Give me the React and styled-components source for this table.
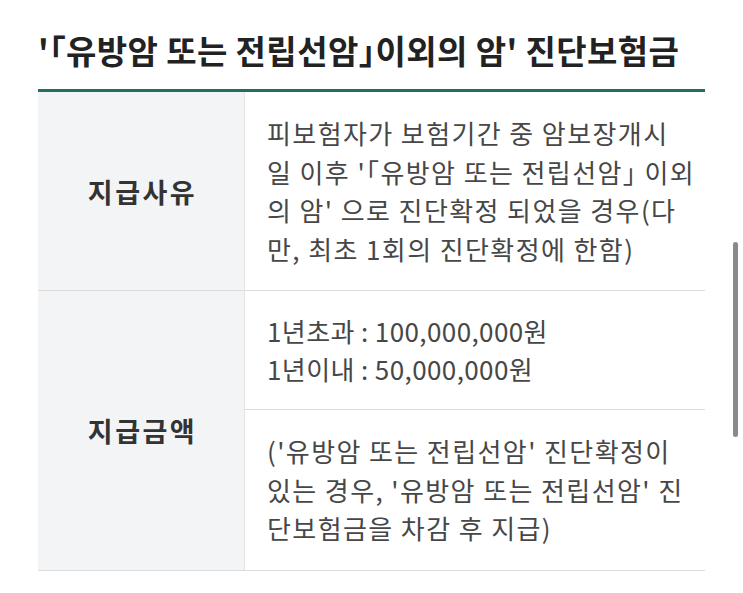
import styled, { createGlobalStyle } from "styled-components";

const GlobalStyle = createGlobalStyle`
  html, body {
    margin: 0;
    padding: 0;
    background: #ffffff;
  }
  body {
    font-family: "Noto Sans CJK KR", "Noto Sans", sans-serif;
    color: #333;
  }
`;

const Page = styled.div`
  padding: 25px 38px 0 38px;
  width: 667px;
`;

const Title = styled.h2`
  margin: 0;
  height: 64px;
  font-size: 33px;
  font-weight: 700;
  color: #222;
  letter-spacing: 0.4px;
  line-height: 50px;
  white-space: nowrap;
`;

// half-width corner brackets, like the reference's proportional punctuation
const Bracket = styled.span`
  font-feature-settings: "halt";
`;

const Table = styled.div`
  border-top: 3px solid #226f62;
  border-bottom: 1.5px solid #dcdcdc;
`;

const Row = styled.div`
  display: grid;
  grid-template-columns: 207px 1fr;
  & + & {
    border-top: 1.5px solid #dcdcdc;
  }
`;

const Head = styled.div`
  background: #f3f4f6;
  border-right: 1.5px solid #e4e4e4;
  display: flex;
  align-items: center;
  justify-content: center;
  padding-left: 3px;
  font-size: 27px;
  font-weight: 700;
  color: #333;
  letter-spacing: 2.5px;
`;

const Cells = styled.div`
  display: flex;
  flex-direction: column;
`;

const Cell = styled.div`
  padding: ${(p) => p.$pad || "22px"} 0 ${(p) => p.$pad || "22px"} 22px;
  font-size: 26px;
  line-height: 38.5px;
  color: #474747;
  font-weight: 400;
  letter-spacing: ${(p) => (p.$num ? "0.4px" : "1.4px")};
  white-space: nowrap;
  & + & {
    border-top: 1.5px solid #dcdcdc;
  }
`;

const Scrollbar = styled.div`
  position: fixed;
  left: 733px;
  top: 242px;
  width: 5px;
  height: 195px;
  border-radius: 3px;
  background: #8a8a8a;
`;

export default function App() {
  return (
    <>
      <GlobalStyle />
      <Page>
        <Title>
          '<Bracket>「</Bracket>유방암 또는 전립선암<Bracket>」</Bracket>이외의 암' 진단보험금
        </Title>
        <Table>
          <Row>
            <Head>지급사유</Head>
            <Cells>
              <Cell>
                피보험자가 보험기간 중 암보장개시
                <br />
                일 이후 '<Bracket>「</Bracket>유방암 또는 전립선암<Bracket>」</Bracket> 이외
                <br />
                의 암' 으로 진단확정 되었을 경우(다
                <br />
                만, 최초 1회의 진단확정에 한함)
              </Cell>
            </Cells>
          </Row>
          <Row>
            <Head>지급금액</Head>
            <Cells>
              <Cell $pad="20.5px" $num>
                1년초과 : 100,000,000원
                <br />
                1년이내 : 50,000,000원
              </Cell>
              <Cell>
                ('유방암 또는 전립선암' 진단확정이
                <br />
                있는 경우, '유방암 또는 전립선암' 진
                <br />
                단보험금을 차감 후 지급)
              </Cell>
            </Cells>
          </Row>
        </Table>
      </Page>
      <Scrollbar />
    </>
  );
}
